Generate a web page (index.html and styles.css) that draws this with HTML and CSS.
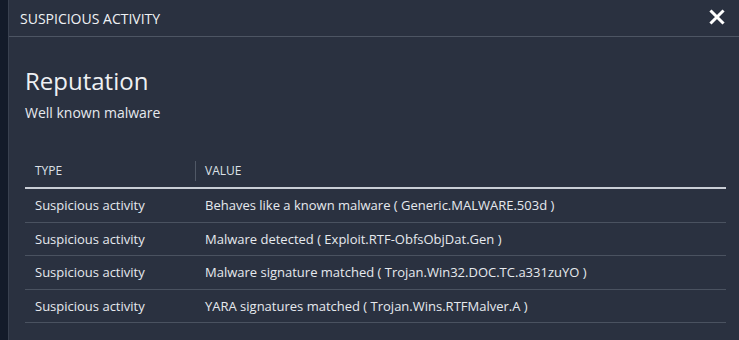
FILE: index.html
```html
<!DOCTYPE html>
<html lang="en">
<head>
    <meta charset="UTF-8">
    <title>Suspicious Activity</title>
    <link rel="stylesheet" href="styles.css">
</head>
<body>
    <div class="page">
        <div class="sidebar"></div>
        <div class="modal">
            <div class="modal-header">
                <span class="modal-title">Suspicious Activity</span>
                <button class="close-btn" aria-label="Close">
                    <svg width="16" height="16" viewBox="0 0 16 16">
                        <path d="M2.5 2.5 L13.5 13.5 M13.5 2.5 L2.5 13.5" stroke="#fff" stroke-width="3" stroke-linecap="square"/>
                    </svg>
                </button>
            </div>
            <div class="modal-body">
                <h2 class="section-title">Reputation</h2>
                <div class="section-sub">Well known malware</div>

                <table class="data-table">
                    <thead>
                        <tr>
                            <th class="col-type">Type</th>
                            <th>Value</th>
                        </tr>
                    </thead>
                    <tbody>
                        <tr>
                            <td>Suspicious activity</td>
                            <td>Behaves like a known malware ( Generic.MALWARE.503d )</td>
                        </tr>
                        <tr>
                            <td>Suspicious activity</td>
                            <td>Malware detected ( Exploit.RTF-ObfsObjDat.Gen )</td>
                        </tr>
                        <tr>
                            <td>Suspicious activity</td>
                            <td>Malware signature matched ( Trojan.Win32.DOC.TC.a331zuYO )</td>
                        </tr>
                        <tr>
                            <td>Suspicious activity</td>
                            <td>YARA signatures matched ( Trojan.Wins.RTFMalver.A )</td>
                        </tr>
                    </tbody>
                </table>
            </div>
        </div>
    </div>
</body>
</html>
```

FILE: styles.css
```css
html, body {
    margin: 0;
    padding: 0;
    height: 100%;
}
body {
    font-family: "Open Sans", "Noto Sans", sans-serif;
    background: #2a3140;
    color: #e6e9ee;
    overflow: hidden;
}
.page {
    display: flex;
    height: 340px;
}
.sidebar {
    width: 8px;
    background: #131b2a;
    border-right: 1px solid #394150;
    flex-shrink: 0;
}
.modal {
    flex: 1;
    background: #2a3140;
}
.modal-header {
    display: flex;
    align-items: center;
    justify-content: space-between;
    height: 36px;
    padding: 0 14px 0 11px;
    border-bottom: 1px solid #4d5563;
}
.modal-title {
    font-size: 14px;
    text-transform: uppercase;
    color: #f0f2f5;
}
.close-btn {
    background: none;
    border: none;
    padding: 0;
    width: 16px;
    height: 16px;
    cursor: pointer;
    display: flex;
    margin-top: -2px;
}
.modal-body {
    padding: 28px 13px 0 16px;
}
.section-title {
    margin: 0;
    font-size: 24px;
    font-weight: 400;
    line-height: 32px;
    color: #eef0f3;
}
.section-sub {
    font-size: 14px;
    line-height: 20px;
    color: #e6e9ee;
    margin-top: 6px;
}
.data-table {
    width: 100%;
    border-collapse: collapse;
    margin-top: 30px;
    font-size: 13px;
}
.data-table th {
    text-align: left;
    font-weight: 400;
    text-transform: uppercase;
    font-size: 12px;
    color: #dde1e7;
    height: 34px;
    padding: 0 10px;
    border-bottom: 2px solid #c9ced6;
    position: relative;
}
.data-table th.col-type {
    width: 150px;
}
.data-table th + th::before {
    content: "";
    position: absolute;
    left: 0;
    top: 8px;
    height: 20px;
    border-left: 1px solid #505866;
}
.data-table td {
    height: 32.5px;
    padding: 0 10px;
    border-bottom: 1px solid #4a5260;
    color: #e6e9ee;
}
```
